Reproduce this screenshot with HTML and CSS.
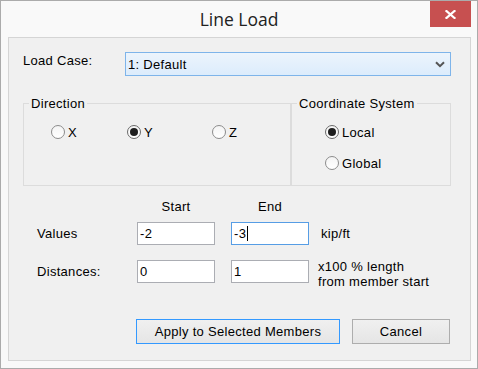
FILE: index.html
```html
<!DOCTYPE html>
<html>
<head>
<meta charset="utf-8">
<link rel="stylesheet" href="styles.css">
</head>
<body>
<div class="window">
  <div class="titlebar">
    <span></span>
    <div class="title">Line Load</div>
    <div class="close"><svg width="11" height="9" viewBox="0 0 11 9"><path d="M1.5 1 L9.5 8 M9.5 1 L1.5 8" stroke="#fff" stroke-width="2.2" stroke-linecap="square" fill="none"/></svg></div>
  </div>
  <div class="panel">
    <div class="row-loadcase">
      <div class="lbl-load">Load Case:</div>
      <div class="select"><span>1: Default</span><svg width="10" height="7" viewBox="0 0 10 7"><path d="M1 1.2 L5 5.2 L9 1.2" stroke="#555" stroke-width="2" fill="none"/></svg></div>
    </div>
    <div class="groups">
      <fieldset class="group dir">
        <legend>Direction</legend>
        <div class="dir-radios">
          <div class="radio-item slot-x"><span class="radio"></span><span>X</span></div>
          <div class="radio-item slot-y"><span class="radio on"></span><span>Y</span></div>
          <div class="radio-item"><span class="radio"></span><span>Z</span></div>
        </div>
      </fieldset>
      <fieldset class="group coord">
        <legend>Coordinate System</legend>
        <div class="coord-radios">
          <div class="radio-item"><span class="radio on"></span><span>Local</span></div>
          <div class="radio-item"><span class="radio"></span><span>Global</span></div>
        </div>
      </fieldset>
    </div>
    <div class="hdr-row"><div class="hdr">Start</div><div class="hdr">End</div></div>
    <div class="row values">
      <div class="row-lbl">Values</div>
      <div class="field">-2</div>
      <div class="field focus">-3<span class="caret"></span></div>
      <div class="unit">kip/ft</div>
    </div>
    <div class="row distances">
      <div class="row-lbl">Distances:</div>
      <div class="field">0</div>
      <div class="field">1</div>
      <div class="unit2">x100 % length<br>from member start</div>
    </div>
    <div class="buttons">
      <div class="btn apply">Apply to Selected Members</div>
      <div class="btn cancel">Cancel</div>
    </div>
  </div>
</div>
</body>
</html>
```
FILE: styles.css
```css
* { box-sizing: border-box; }
body {
  margin: 0;
  font-family: "Liberation Sans", Arial, sans-serif;
  font-size: 13px;
  letter-spacing: 0.3px;
  color: #000;
}
.window {
  width: 478px;
  height: 369px;
  border: 1px solid #ababab;
  background: #f9f9f9;
  display: flex;
  flex-direction: column;
}
.titlebar {
  height: 36px;
  flex: none;
  display: grid;
  grid-template-columns: 1fr auto 1fr;
}
.title {
  font-family: "Open Sans", sans-serif;
  font-size: 17.5px;
  line-height: 36px;
  letter-spacing: 0;
  color: #222;
}
.close {
  justify-self: end;
  align-self: start;
  width: 41px;
  height: 26px;
  margin-right: 6px;
  background: #c75050;
  display: flex;
  align-items: center;
  justify-content: center;
}
.close svg { display: block; }
.panel {
  margin: 0 6px 7px 7px;
  height: 324px;
  flex: none;
  border: 1px solid #d5d5d5;
  background: #f0f0f0;
  padding: 14px 0 0 14px;
}
.row-loadcase {
  display: flex;
  height: 24px;
}
.lbl-load {
  width: 102px;
  line-height: 15px;
  padding-top: 1px;
}
.select {
  width: 326px;
  height: 24px;
  border: 1px solid #7eb4ea;
  background: linear-gradient(#ecf4fc, #dcecfc);
  display: flex;
  align-items: center;
  justify-content: space-between;
  padding: 0 5px 0 2px;
  line-height: 15px;
}
.select svg { display: block; }
.groups {
  display: flex;
  margin-top: 20px;
}
.group {
  margin: 0;
  height: 90px;
  min-width: 0;
  border: 1px solid #dcdcdc;
  padding: 0 0 0 5px;
}
.group legend {
  padding: 0 2px;
  line-height: 15px;
}
.dir { width: 268px; }
.coord { width: 160px; }
.dir-radios {
  display: flex;
  margin-top: 14px;
  padding-left: 22px;
}
.slot-x { width: 76px; }
.slot-y { width: 85px; }
.coord-radios {
  display: flex;
  flex-direction: column;
  gap: 17px;
  margin-top: 14px;
  padding-left: 28px;
}
.radio-item {
  display: flex;
  align-items: center;
  gap: 3px;
  height: 14px;
  line-height: 15px;
}
.radio {
  width: 14px;
  height: 14px;
  border: 1px solid #8c8c8c;
  border-radius: 50%;
  background: linear-gradient(#f4f4f4, #ffffff);
  display: flex;
  align-items: center;
  justify-content: center;
  flex: none;
}
.radio.on { border-color: #6a6a6a; }
.radio.on::after {
  content: "";
  width: 8px;
  height: 8px;
  border-radius: 50%;
  background: #1e1e1e;
}
.hdr-row {
  display: flex;
  gap: 16px;
  margin-top: 13px;
  padding-left: 114px;
}
.hdr {
  width: 78px;
  text-align: center;
  line-height: 15px;
}
.row {
  display: flex;
  align-items: center;
  height: 23px;
  padding-left: 14px;
}
.values { margin-top: 8px; }
.distances { margin-top: 15px; }
.row-lbl {
  width: 100px;
  line-height: 15px;
}
.field {
  width: 78px;
  height: 23px;
  border: 1px solid #abadb3;
  background: #fff;
  padding-left: 2px;
  display: flex;
  align-items: center;
  line-height: 15px;
}
.field + .field { margin-left: 16px; }
.field.focus { border-color: #569de5; }
.caret {
  display: inline-block;
  width: 1px;
  height: 15px;
  background: #000;
  margin-left: 1px;
}
.unit {
  margin-left: 12px;
  line-height: 15px;
}
.unit2 {
  margin-left: 9px;
  line-height: 15px;
  align-self: flex-start;
  margin-top: -1px;
  white-space: nowrap;
}
.buttons {
  display: flex;
  gap: 12px;
  margin-top: 36px;
  padding-left: 113px;
}
.btn {
  height: 25px;
  background: linear-gradient(#f0f0f0, #e5e5e5);
  display: flex;
  align-items: center;
  justify-content: center;
  line-height: 15px;
}
.apply { width: 204px; border: 1px solid #3399ff; }
.cancel { width: 98px; border: 1px solid #adadad; }
```
